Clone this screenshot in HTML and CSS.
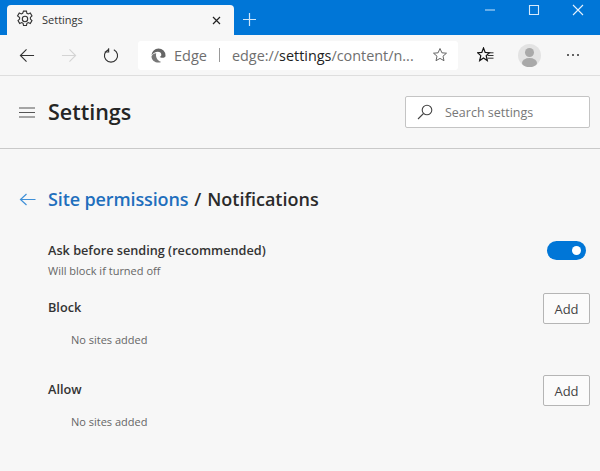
FILE: index.html
```html
<!DOCTYPE html>
<html lang="en">
<head>
<meta charset="utf-8">
<title>Settings</title>
<link rel="stylesheet" href="styles.css">
</head>
<body>
<div class="titlebar">
  <div class="tab">
    <svg class="tab-gear" viewBox="0 0 16 16"><path d="M6.700 1h2.600l.4 1.900 1.200.6 1.800-.8 1.500 2.600-1.400 1.300v1.500l1.400 1.300-1.500 2.600-1.800-.8-1.200.7-.4 1.900H6.700l-.4-1.900-1.200-.7-1.800.8-1.500-2.600 1.400-1.300V6.600L1.400 5.300l1.500-2.600 1.800.8 1.200-.6z" fill="none" stroke="#333" stroke-width="1"/><circle cx="8" cy="8" r="2.400" fill="none" stroke="#333"/></svg>
    <span class="tab-title">Settings</span>
    <svg class="tab-close" viewBox="0 0 9 9"><path d="M1 1l7 7M8 1L1 8" stroke="#222" stroke-width="1.200"/></svg>
  </div>
  <svg class="newtab" viewBox="0 0 13 13"><path d="M6.500 0v13M0 6.500h13" stroke="#cfe6fa" stroke-width="1.200"/></svg>
  <div class="winctl">
    <svg class="win-ic" viewBox="0 0 12 12"><path d="M1 6h10" stroke="#a9d3f5" stroke-width="1.200"/></svg>
    <svg class="win-ic" viewBox="0 0 12 12"><path d="M1.500 1.500h9v9h-9z" fill="none" stroke="#d6eafb" stroke-width="1.100"/></svg>
    <svg class="win-ic" viewBox="0 0 12 12"><path d="M1 1l10 10M11 1L1 11" stroke="#e6f2fc" stroke-width="1.100"/></svg>
  </div>
</div>
<div class="toolbar">
  <svg class="nav-ic back" viewBox="0 0 17 15"><path d="M16 7.500H1.500M8 1L1.500 7.500 8 14" fill="none" stroke="#333" stroke-width="1.200"/></svg>
  <svg class="nav-ic fwd" viewBox="0 0 17 15"><path d="M1 7.500h14.500M9 1l6.500 6.500L9 14" fill="none" stroke="#d4d4d4" stroke-width="1.200"/></svg>
  <svg class="nav-ic reload" viewBox="0 0 17 17"><path d="M5.500 2.300A7 7 0 1 0 11.500 2.300M6 0.800V4.800H1.800" fill="none" stroke="#333" stroke-width="1.200" transform="translate(0 .5)"/></svg>
  <div class="address">
    <svg class="edge" viewBox="0 0 16 16"><path d="M8 .5a7.500 7.500 0 0 1 7.500 7.700c0 1.500-1.500 2.300-3.200 2.300-1.300 0-2.500-.4-3-.9 1.200-.4 1.700-1.300 1.700-2.300C11 5 9.500 4 7.300 4 4.600 4 2.300 5.400.6 7.800 1 3.600 4 .5 8 .5z" fill="#666"/><path d="M.5 9C1.500 6.800 3.500 5.600 5.600 5.600c-.8 3 .2 7.300 5.200 9.300-.9.400-1.800.6-2.800.6C3.800 15.500.7 12.800.5 9z" fill="#777"/></svg>
    <span class="edge-label">Edge</span>
    <span class="addr-sep"></span>
    <span class="url">edge://<b class="url-strong">settings</b>/content/n...</span>
    <svg class="star" viewBox="0 0 16 16"><path d="M8 1.500l1.900 4.300 4.600.4-3.500 3 1 4.500L8 11.400l-4 2.300 1-4.500-3.500-3 4.600-.4z" fill="none" stroke="#666" stroke-width="1"/></svg>
  </div>
  <svg class="fav" viewBox="0 0 17 16"><path d="M6.500 1L8.200 5.400l4.300.3-3.300 2.900 1.100 5-3.800-2.600-3.800 2.600 1.100-5L.5 5.700l4.300-.3z" fill="none" stroke="#111" stroke-width="1.200"/><path d="M10 5.800h6.500M10.500 8.500h6M10.500 11.200h6" stroke="#333" stroke-width="1"/></svg>
  <div class="avatar"><span class="avatar-head"></span><span class="avatar-body"></span></div>
  <div class="more"><i class="dot"></i><i class="dot"></i><i class="dot"></i></div>
</div>
<header class="head">
  <svg class="menu" viewBox="0 0 16 11"><path d="M0 1h16M0 5.500h16M0 10h16" stroke="#555" stroke-width="1.200"/></svg>
  <h1 class="page-title">Settings</h1>
  <div class="search">
    <svg class="search-ic" viewBox="0 0 16 16"><circle cx="10" cy="6" r="4.800" fill="none" stroke="#444" stroke-width="1.100"/><path d="M6.500 9.500L1 15" stroke="#444" stroke-width="1.100"/></svg>
    <span class="search-text">Search settings</span>
  </div>
</header>
<main class="content">
  <div class="crumb">
    <svg class="crumb-back" viewBox="0 0 17 13"><path d="M16.500 6.500H1.500M7.500 1l-6 5.500 6 5.500" fill="none" stroke="#3f90d8" stroke-width="1.200"/></svg>
    <h2 class="crumb-text"><a class="crumb-link">Site permissions</a> / Notifications</h2>
  </div>
  <div class="row toggle-row">
    <div>
      <div class="label">Ask before sending (recommended)</div>
      <div class="hint">Will block if turned off</div>
    </div>
    <div class="switch"><span class="knob"></span></div>
  </div>
  <section class="group">
    <div class="row">
      <div class="label label-side">Block</div>
      <div class="btn">Add</div>
    </div>
    <div class="empty">No sites added</div>
  </section>
  <section class="group group-allow">
    <div class="row">
      <div class="label label-side">Allow</div>
      <div class="btn">Add</div>
    </div>
    <div class="empty">No sites added</div>
  </section>
</main>
</body>
</html>
```

FILE: styles.css
```css
* { box-sizing: border-box; }
html, body { margin: 0; padding: 0; }
body {
  width: 600px;
  height: 471px;
  overflow: hidden;
  background: #f7f7f7;
  font-family: "Open Sans", "Noto Sans", sans-serif;
  color: #333;
}
.titlebar {
  height: 35px;
  background: #0076d7;
  display: flex;
  align-items: flex-end;
  padding-left: 7px;
}
.tab {
  width: 227px;
  height: 30px;
  padding: 0 13px 2px 9px;
  background: #f7f7f7;
  border-radius: 4px 4px 0 0;
  display: flex;
  align-items: center;
}
.tab-gear { width: 18px; height: 18px; margin-right: 8px; }
.tab-title { font-size: 11px; color: #333; flex: 1; }
.tab-close { width: 9px; height: 9px; margin-top: 2px; }
.newtab { width: 13px; height: 13px; margin: 0 0 9px 9px; }
.winctl {
  margin-left: auto;
  align-self: flex-start;
  display: flex;
  gap: 32px;
  padding: 4px 16px 0 0;
}
.win-ic { width: 12px; height: 12px; }
.toolbar {
  height: 41px;
  display: flex;
  align-items: center;
  border-bottom: 1px solid #dedede;
  padding-left: 19px;
}
.nav-ic { flex: none; }
.back { width: 16px; height: 15px; }
.fwd { width: 16px; height: 15px; margin-left: 26px; }
.reload { width: 16px; height: 16px; margin-left: 26px; }
.address {
  width: 320px;
  height: 29px;
  margin-left: 19px;
  background: #fff;
  border-radius: 3px;
  display: flex;
  align-items: center;
  padding-left: 13px;
  font-size: 14px;
  color: #6f6f6f;
}
.edge { width: 15px; height: 15px; margin-right: 8px; }
.edge-label { font-size: 14.5px; color: #6e6e6e; }
.addr-sep { width: 1px; height: 14px; background: #999; margin: 0 12px 0 12px; }
.url { font-size: 14.4px; white-space: nowrap; }
.url-strong { font-weight: 400; color: #222; }
.star { width: 16px; height: 16px; margin-left: auto; margin-right: 10px; }
.fav { width: 17px; height: 16px; margin-left: 19px; flex: none; }
.avatar {
  width: 23px;
  height: 23px;
  margin-left: 24px;
  border-radius: 50%;
  background: #e3e3e3;
  position: relative;
  overflow: hidden;
  flex: none;
}
.avatar-head {
  position: absolute;
  left: 7px;
  top: 4px;
  width: 9px;
  height: 9px;
  border-radius: 50%;
  background: #a9a9a9;
}
.avatar-body {
  position: absolute;
  left: 4px;
  top: 14px;
  width: 15px;
  height: 10px;
  border-radius: 50%;
  background: #a9a9a9;
}
.more { display: flex; gap: 3px; margin-left: 26px; }
.dot { width: 2px; height: 2px; background: #333; border-radius: 50%; }
.head {
  height: 73px;
  border-bottom: 1px solid #c9c9c9;
  display: flex;
  align-items: center;
  padding: 0 10px 0 19px;
}
.menu { width: 16px; height: 11px; flex: none; }
.page-title {
  margin: 0 0 2px 13px;
  font-size: 21.5px;
  font-weight: 600;
  color: #252525;
}
.search {
  width: 185px;
  height: 32px;
  margin-left: auto;
  background: #fff;
  border: 1px solid #c4c4c4;
  border-radius: 2px;
  display: flex;
  align-items: center;
  padding-left: 11px;
}
.search-ic { width: 16px; height: 16px; }
.search-text { font-size: 12.5px; color: #777; margin-left: 12px; }
.content { padding: 35px 10px 0 19px; }
.crumb { display: flex; align-items: center; height: 30px; }
.crumb-back { width: 17px; height: 13px; flex: none; }
.crumb-text {
  margin: 0 0 0 12px;
  font-size: 18px;
  font-weight: 600;
  color: #2b2b2b;
  word-spacing: 1.2px;
}
.crumb-link { color: #1f6fbd; letter-spacing: -0.12px; word-spacing: 0; }
.row {
  display: flex;
  justify-content: space-between;
  align-items: center;
  padding-left: 29px;
}
.toggle-row { margin-top: 27px; padding-right: 4px; align-items: flex-start; }
.label { font-size: 12.7px; font-weight: 600; color: #333; }
.label-side { margin-bottom: 4px; }
.hint { font-size: 11px; color: #666; margin-top: 4px; }
.switch {
  width: 39px;
  height: 19px;
  border-radius: 10px;
  background: #0076d7;
  display: flex;
  justify-content: flex-end;
  align-items: center;
  padding-right: 5px;
}
.knob { width: 9px; height: 9px; border-radius: 50%; background: #fff; }
.group { margin-top: 15px; }
.group-allow { margin-top: 28px; }
.btn {
  width: 47px;
  height: 31px;
  border: 1px solid #b5b5b5;
  border-radius: 2px;
  background: #fbfbfb;
  font-size: 13px;
  color: #444;
  display: flex;
  align-items: center;
  justify-content: center;
}
.empty { font-size: 11px; color: #666; padding-left: 52px; margin-top: 8px; }
```
